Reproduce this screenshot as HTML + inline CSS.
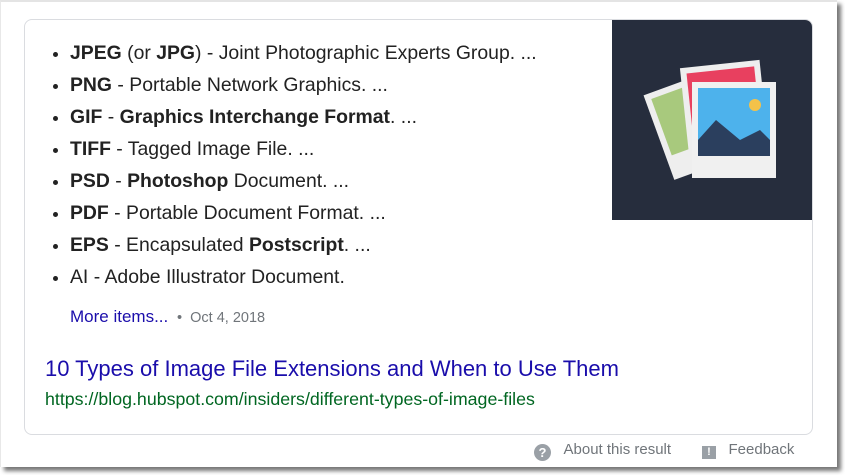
<!DOCTYPE html>
<html><head><style>
html,body{margin:0;padding:0;width:845px;height:475px;overflow:hidden;background:#fff;font-family:"Liberation Sans",Arial,sans-serif;}
.frame{position:absolute;left:0;top:0;width:837px;height:467px;background:#fff;border-top:2px solid #e4e4e4;border-left:1px solid #e8e8e8;box-sizing:border-box;box-shadow:4px 4px 4px #777;}
.card{position:absolute;left:23px;top:17px;width:789px;height:416px;border:1px solid #dadce0;border-radius:8px;box-sizing:border-box;overflow:hidden;}
.img{position:absolute;left:587px;top:0px;width:200px;height:200px;background:#262d3d;}
ul{position:absolute;left:21px;top:17px;margin:0;padding:0 0 0 24px;font-size:19.4px;color:#222;}
li{height:32px;line-height:32px;white-space:nowrap;}
li::marker{font-size:19px;}
b{font-weight:bold;}
.more{position:absolute;left:45px;top:287px;font-size:17px;color:#1a0dab;}
.date{color:#70757a;font-size:14.5px;}
.title{position:absolute;left:20px;top:336px;font-size:22px;color:#1a0dab;}
.url{position:absolute;left:20px;top:369px;font-size:17.8px;color:#006621;}
.foot{position:absolute;top:439px;font-size:15px;color:#70757a;}
</style></head><body>
<div class="frame">
<div class="card">
<ul>
<li><b>JPEG</b> (or <b>JPG</b>) - Joint Photographic Experts Group. ...</li>
<li><b>PNG</b> - Portable Network Graphics. ...</li>
<li><b>GIF</b> - <b>Graphics Interchange Format</b>. ...</li>
<li><b>TIFF</b> - Tagged Image File. ...</li>
<li><b>PSD</b> - <b>Photoshop</b> Document. ...</li>
<li><b>PDF</b> - Portable Document Format. ...</li>
<li><b>EPS</b> - Encapsulated <b>Postscript</b>. ...</li>
<li>AI - Adobe Illustrator Document.</li>
</ul>
<div class="more">More items... <span class="date">&nbsp;•&nbsp; Oct 4, 2018</span></div>
<div class="title">10 Types of Image File Extensions and When to Use Them</div>
<div class="url">https://blog.hubspot.com/insiders/different-types-of-image-files</div>
<div class="img">
<svg width="200" height="200" viewBox="0 0 200 200">
<g transform="rotate(-20 70 105)"><rect x="44" y="64" width="58" height="90" fill="#eee"/><rect x="50" y="70" width="46" height="60" fill="#a8c97d"/></g>
<g transform="rotate(-6 110 85)"><rect x="72" y="44" width="80" height="98" fill="#eee"/><rect x="78" y="50" width="68" height="68" fill="#e8405f"/></g>
<rect x="80" y="62" width="84" height="96" fill="#f0f0f0"/>
<rect x="86" y="68" width="72" height="68" fill="#4db2ec"/>
<circle cx="143" cy="85" r="6" fill="#f4c24a"/>
<polygon points="86,120 104,100 128,120 148,110 158,120 158,136 86,136" fill="#2b3f5e"/>
</svg>
</div>
</div>
<div class="foot" style="left:533px;"><span style="display:inline-block;width:17px;height:17px;border-radius:50%;background:#9aa0a6;color:#fff;font-size:13px;text-align:center;line-height:17px;font-weight:bold;vertical-align:-3px;">?</span>&nbsp;&nbsp;&nbsp;About this result</div>
<div class="foot" style="left:701px;"><span style="display:inline-block;width:14px;height:13px;background:#9aa0a6;color:#fff;font-size:11px;text-align:center;line-height:13px;font-weight:bold;vertical-align:-1px;">!</span>&nbsp;&nbsp;&nbsp;Feedback</div>
</div>
</body></html>
